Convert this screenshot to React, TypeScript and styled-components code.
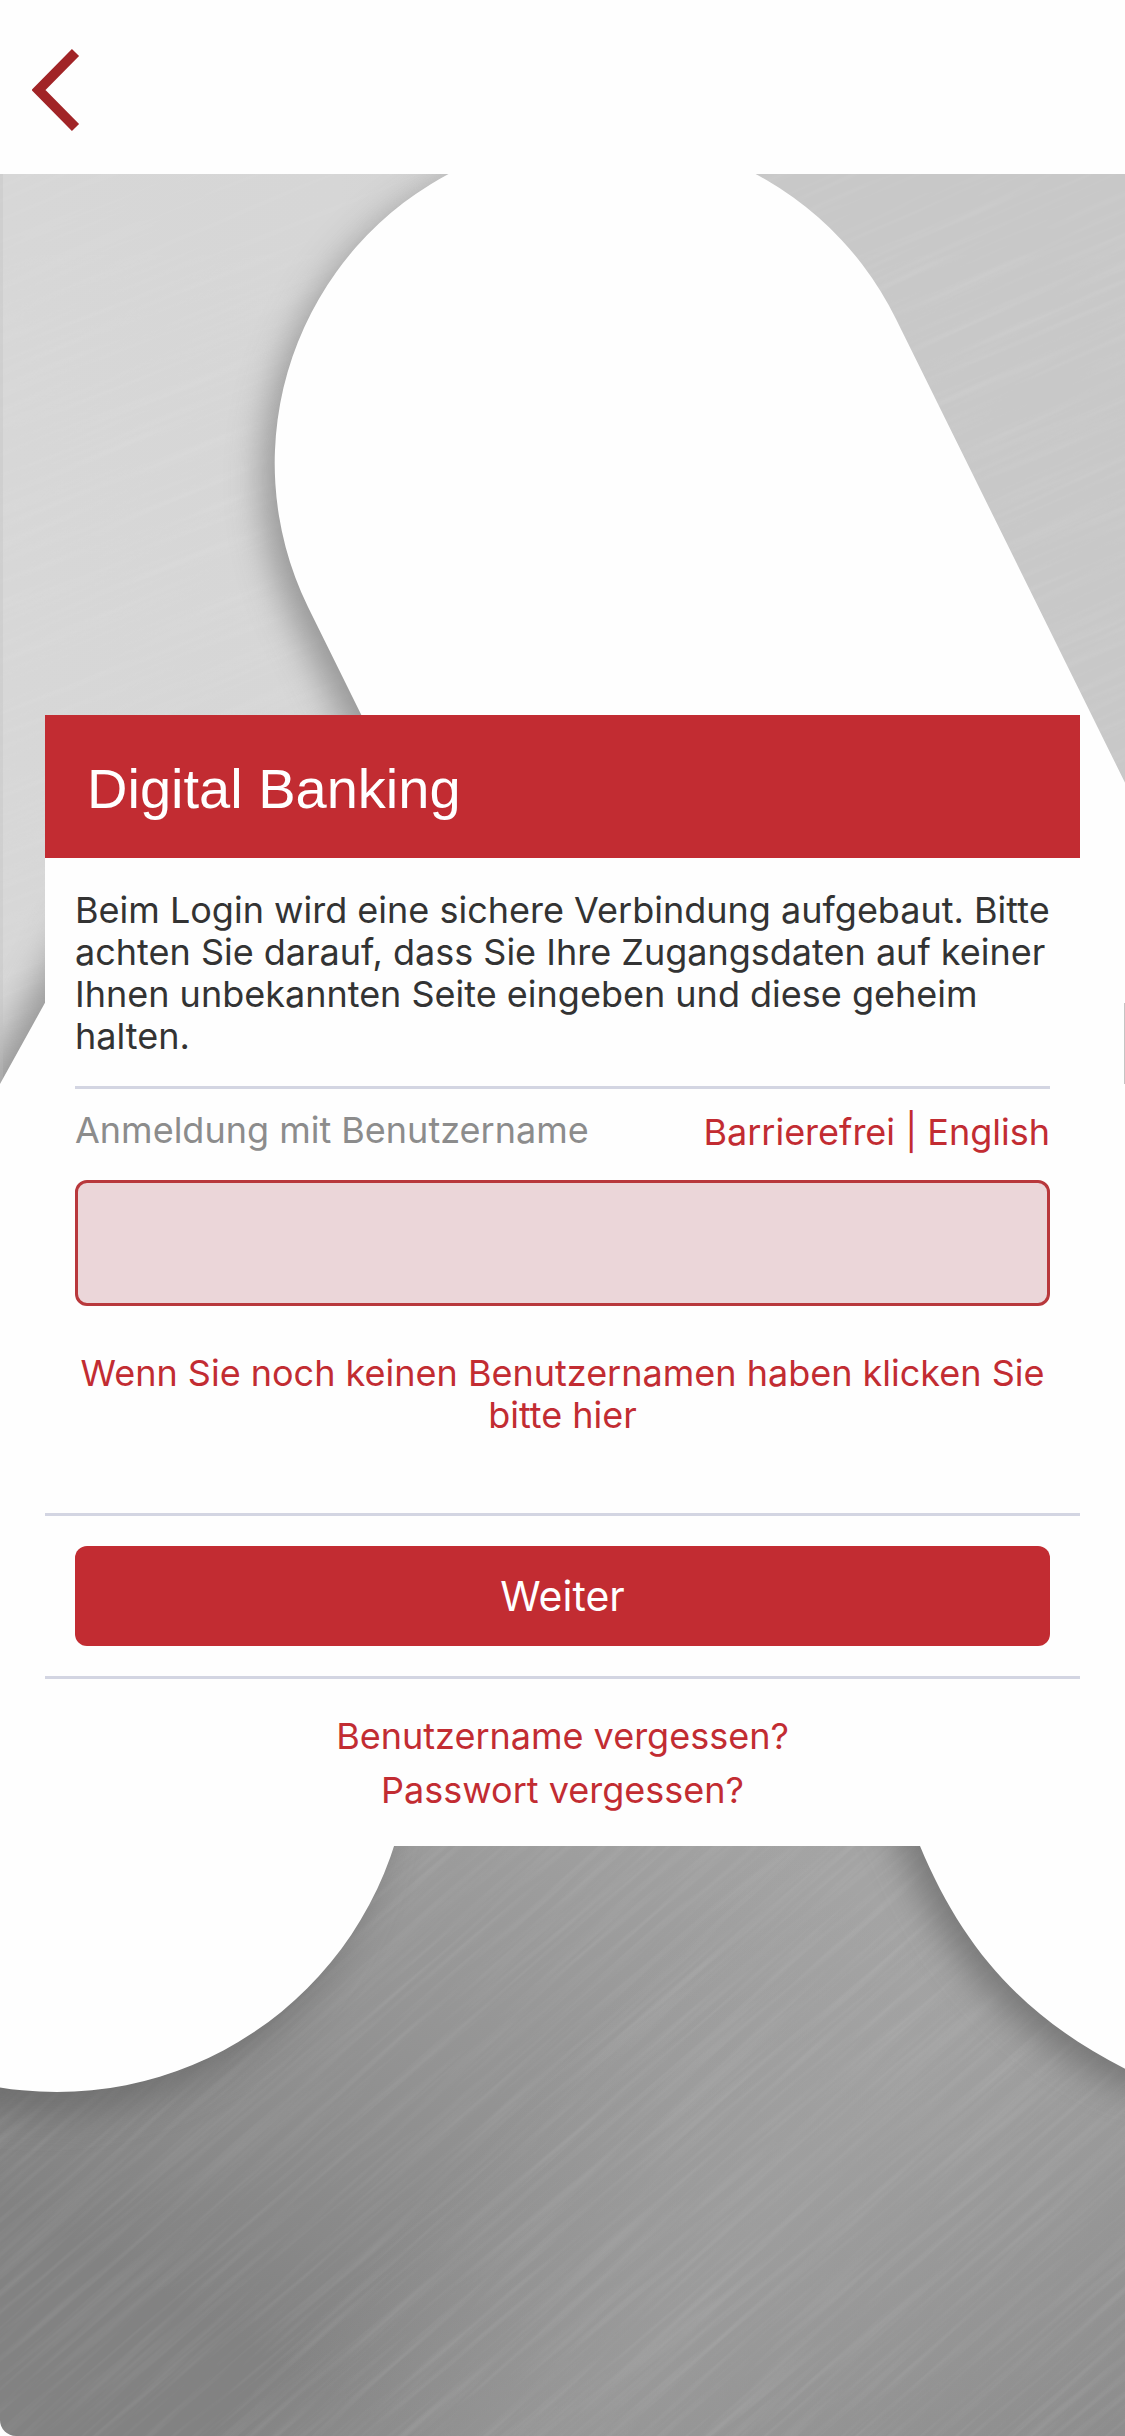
import React from "react";
import styled, { createGlobalStyle } from "styled-components";

const colors = {
  red: "#c22c32",
  chevron: "#a12427",
  rule: "#d3d5e2",
  text: "#333333",
  muted: "#8c8c8c",
  field: "#ebd6d9",
  fieldBorder: "#b8383c",
  white: "#fefefe",
};

const GlobalStyle = createGlobalStyle`
  *, *::before, *::after { box-sizing: border-box; }
  body {
    margin: 0;
    background: ${colors.white};
    color: ${colors.text};
    font-family: Inter, "Liberation Sans", sans-serif;
    font-size: 36px;
    line-height: 42px;
  }
`;

const Page = styled.div`
  display: flex;
  flex-direction: column;
  min-height: 100vh;
`;

const TopBar = styled.header`
  display: flex;
  align-items: center;
  height: 174px;
  padding: 6px 32px 0;
`;

const BackButton = styled.button`
  display: flex;
  padding: 0;
  border: 0;
  background: none;
  color: ${colors.chevron};
  cursor: pointer;
`;

const Stage = styled.main`
  position: relative;
  flex: 1;
  padding: 541px 45px 60px;
  overflow: hidden;
  border-bottom-left-radius: 16px;
`;

const Backdrop = styled.svg`
  position: absolute;
  inset: 0;
  width: 100%;
  height: 100%;
`;

const Card = styled.form`
  position: relative;
  background: ${colors.white};
`;

const CardHeader = styled.h1`
  margin: 0;
  padding: 42px 42px 37px;
  background: ${colors.red};
  color: #ffffff;
  font-family: "Liberation Sans", Arial, sans-serif;
  font-size: 56px;
  font-weight: 400;
  line-height: 64px;
`;

const CardBody = styled.div`
  padding: 31px 30px 77px;
`;

const Notice = styled.p`
  margin: 0;
  padding-bottom: 29px;
  border-bottom: 3px solid ${colors.rule};
`;

const LabelRow = styled.div`
  display: flex;
  justify-content: space-between;
  padding: 20px 0 27px;
`;

const FieldLabel = styled.label`
  color: ${colors.muted};
`;

const Options = styled.nav`
  padding-top: 2px;
  color: ${colors.red};
`;

const TextLink = styled.a`
  color: ${colors.red};
  text-decoration: none;
`;

const TextField = styled.input`
  display: block;
  width: 100%;
  height: 126px;
  padding: 0 24px;
  border: 3px solid ${colors.fieldBorder};
  border-radius: 12px;
  background: ${colors.field};
  color: ${colors.text};
  font: inherit;
`;

const Hint = styled.p`
  margin: 0;
  padding-top: 46px;
  text-align: center;
`;

const Actions = styled.div`
  padding: 30px;
  border: solid ${colors.rule};
  border-width: 3px 0;
`;

const SubmitButton = styled.button`
  display: block;
  width: 100%;
  height: 100px;
  border: 0;
  border-radius: 12px;
  background: ${colors.red};
  color: #ffffff;
  font-family: inherit;
  font-size: 41px;
  cursor: pointer;
`;

const CardFooter = styled.footer`
  display: flex;
  flex-direction: column;
  align-items: center;
  gap: 12px;
  padding: 36px 30px 35px;
`;

function MetalBackdrop() {
  return (
    <Backdrop viewBox="0 0 1125 2262" preserveAspectRatio="xMidYMin slice" aria-hidden="true">
      <defs>
        <linearGradient id="metalLight" x1="0" y1="0" x2="1" y2="0">
          <stop offset="0" stopColor="#d7d7d7" />
          <stop offset="0.3" stopColor="#d6d6d6" />
          <stop offset="0.8" stopColor="#cacaca" />
          <stop offset="1" stopColor="#c9c9c9" />
        </linearGradient>
        <linearGradient id="metalDark" gradientUnits="userSpaceOnUse" x1="760" y1="1660" x2="400" y2="2262">
          <stop offset="0" stopColor="#a3a3a3" />
          <stop offset="0.5" stopColor="#949494" />
          <stop offset="1" stopColor="#828282" />
        </linearGradient>
        <linearGradient id="sheen" gradientUnits="userSpaceOnUse" x1="560" y1="1880" x2="1040" y2="2320">
          <stop offset="0" stopColor="#aaaaaa" stopOpacity="0" />
          <stop offset="0.4" stopColor="#a3a3a3" stopOpacity="0.6" />
          <stop offset="1" stopColor="#8a8a8a" stopOpacity="0.7" />
        </linearGradient>
        <filter id="soft" x="-20%" y="-20%" width="140%" height="140%">
          <feGaussianBlur stdDeviation="18" />
        </filter>
        <filter id="brushed" x="0" y="0" width="100%" height="100%">
          <feTurbulence type="fractalNoise" baseFrequency="0.005 0.14" numOctaves="3" seed="7" />
          <feColorMatrix values="0 0 0 0 1  0 0 0 0 1  0 0 0 0 1  2.4 0 0 0 -1.05" />
        </filter>
        <clipPath id="upper">
          <rect width="1125" height="1100" />
        </clipPath>
        <clipPath id="lower">
          <rect y="1100" width="1125" height="1162" />
        </clipPath>
      </defs>

      <g clipPath="url(#upper)">
        <rect width="1125" height="1100" fill="url(#metalLight)" />
        <g opacity="0.06">
          <rect x="-500" y="-300" width="2200" height="1700" transform="rotate(-22 560 500)" filter="url(#brushed)" />
        </g>
        <path
          d="M 896 145 A 327 327 0 0 0 308 433 L 520 869 L 1260 869 Z"
          transform="translate(-12 16)"
          fill="#7d7d7d"
          opacity="0.72"
          filter="url(#soft)"
        />
        <path d="M 700 -20 L 1160 -20 L 1160 700 L 896 145 Z" fill="#c8c8c8" />
        <g opacity="0.07">
          <svg x="740" y="-20" width="400" height="840">
            <rect x="-600" y="-400" width="1600" height="1600" transform="rotate(-24 200 300)" filter="url(#brushed)" />
          </svg>
        </g>
        <path d="M -60 1010 L 100 722 L 100 1010 Z" fill="#7d7d7d" opacity="0.75" transform="translate(-12 0)" filter="url(#soft)" />
        <rect width="3" height="910" fill="#bdbdbd" opacity="0.3" />
      </g>

      <g clipPath="url(#lower)">
        <rect y="1100" width="1125" height="1162" fill="url(#metalDark)" />
        <rect y="1100" width="1125" height="1162" fill="url(#sheen)" />
        <g opacity="0.075">
          <rect x="-500" y="1000" width="2200" height="1900" transform="rotate(-41 560 1950)" filter="url(#brushed)" />
        </g>
        <circle cx="42" cy="1592" r="350" fill="#606060" opacity="0.6" filter="url(#soft)" />
        <path
          d="M 740 1300 L 920 1672 C 965 1780 1030 1850 1140 1902 L 1500 1902 L 1500 1300 Z"
          transform="translate(-14 12)"
          fill="#606060"
          opacity="0.65"
          filter="url(#soft)"
        />
      </g>

      <g fill={colors.white}>
        <path d="M 896 145 A 327 327 0 0 0 308 433 L 920 1672 C 965 1780 1030 1850 1140 1902 L 1500 1902 L 1500 1368 Z" />
        <path d="M 0 910 L 180 585 L 600 900 L 411 1564 A 354 354 0 0 1 -297 1564 L -297 910 Z" />
      </g>
      <rect x="1124" y="829" width="1" height="81" fill="#c4c4c4" />
    </Backdrop>
  );
}

export default function App() {
  return (
    <Page>
      <GlobalStyle />
      <TopBar>
        <BackButton type="button" aria-label="Zurück">
          <svg width="48" height="82" viewBox="0 0 48 82" fill="none" aria-hidden="true">
            <path d="M43.500 3.500 L6.500 41 L43.500 78.500" stroke="currentColor" strokeWidth="10" />
          </svg>
        </BackButton>
      </TopBar>
      <Stage>
        <MetalBackdrop />
        <Card onSubmit={(event) => event.preventDefault()}>
          <CardHeader>Digital Banking</CardHeader>
          <CardBody>
            <Notice>
              Beim Login wird eine sichere Verbindung aufgebaut. Bitte achten Sie darauf, dass Sie Ihre
              Zugangsdaten auf keiner Ihnen unbekannten Seite eingeben und diese geheim halten.
            </Notice>
            <LabelRow>
              <FieldLabel htmlFor="username">Anmeldung mit Benutzername</FieldLabel>
              <Options>
                <TextLink href="#barrierefrei">Barrierefrei</TextLink> | <TextLink href="#english">English</TextLink>
              </Options>
            </LabelRow>
            <TextField id="username" name="username" type="text" autoComplete="username" />
            <Hint>
              <TextLink href="#benutzername">Wenn Sie noch keinen Benutzernamen haben klicken Sie bitte hier</TextLink>
            </Hint>
          </CardBody>
          <Actions>
            <SubmitButton type="submit">Weiter</SubmitButton>
          </Actions>
          <CardFooter>
            <TextLink href="#benutzername-vergessen">Benutzername vergessen?</TextLink>
            <TextLink href="#passwort-vergessen">Passwort vergessen?</TextLink>
          </CardFooter>
        </Card>
      </Stage>
    </Page>
  );
}
